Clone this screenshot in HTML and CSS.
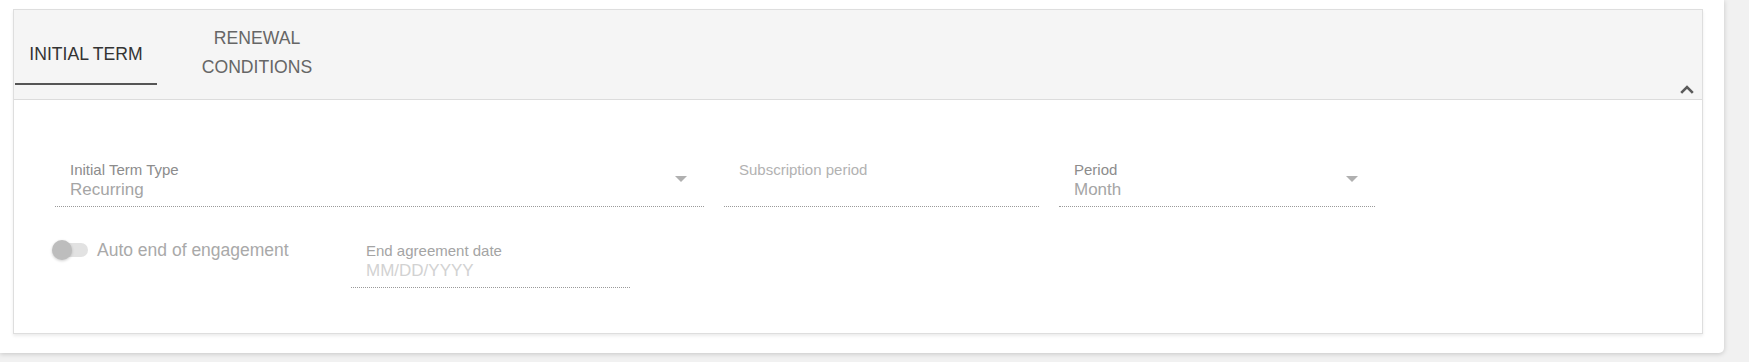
FILE: index.html
```html
<!DOCTYPE html>
<html lang="en">
<head>
<meta charset="utf-8">
<title>Initial Term</title>
<link rel="stylesheet" href="styles.css">
</head>
<body>
<div class="card">
  <section class="panel">
    <header class="panel-header">
      <nav class="tabs">
        <div class="tab tab-active">INITIAL TERM</div>
        <div class="tab tab-wrap">RENEWAL CONDITIONS</div>
      </nav>
      <button class="collapse" aria-label="Collapse">
        <svg width="14" height="9" viewBox="0 0 14 9"><path d="M1.2 7.8 L7 2 L12.8 7.8" fill="none" stroke="#5a5a5a" stroke-width="2.6"/></svg>
      </button>
    </header>
    <div class="panel-body">
      <div class="row row-fields">
        <div class="field w-6">
          <div class="field-text">
            <div class="field-label">Initial Term Type</div>
            <div class="field-value">Recurring</div>
          </div>
          <span class="arrow"></span>
        </div>
        <div class="field w-3a">
          <div class="field-text">
            <div class="field-label field-label-light">Subscription period</div>
            <div class="field-value">&nbsp;</div>
          </div>
        </div>
        <div class="field w-3b">
          <div class="field-text">
            <div class="field-label">Period</div>
            <div class="field-value">Month</div>
          </div>
          <span class="arrow"></span>
        </div>
      </div>
      <div class="row row-second">
        <label class="toggle-group">
          <span class="toggle"><span class="track"></span><span class="thumb"></span></span>
          <span class="toggle-text">Auto end of engagement</span>
        </label>
        <div class="field w-date">
          <div class="field-text">
            <div class="field-label field-label-mid">End agreement date</div>
            <div class="field-value field-placeholder">MM/DD/YYYY</div>
          </div>
        </div>
      </div>
    </div>
  </section>
</div>
</body>
</html>
```

FILE: styles.css
```css
html, body {
  margin: 0;
  padding: 0;
}
body {
  background: #f1f1f1;
  font-family: "Liberation Sans", Arial, sans-serif;
  width: 1749px;
  height: 362px;
  overflow: hidden;
}
.card {
  width: 1724px;
  box-sizing: border-box;
  background: #fff;
  padding: 9px 21px 19px 13px;
  border-radius: 0 0 5px 0;
  box-shadow: 0 1px 5px rgba(0, 0, 0, 0.18);
}
.panel {
  border: 1px solid #dedede;
  background: #fff;
  box-shadow: 0 2px 3px rgba(0, 0, 0, 0.08);
}
.panel-header {
  background: #f5f5f5;
  height: 89px;
  border-bottom: 1px solid #dcdcdc;
  display: flex;
  justify-content: space-between;
  align-items: flex-end;
}
.tabs {
  display: flex;
  align-self: flex-start;
  margin-top: 15px;
  margin-left: 1px;
}
.tab {
  height: 58px;
  border-bottom: 2px solid transparent;
  display: flex;
  align-items: center;
  justify-content: center;
  text-align: center;
  font-size: 17.6px;
  line-height: 29px;
  color: #666;
}
.tab-active {
  width: 142px;
  color: #333;
  border-bottom-color: #555;
}
.tab-wrap {
  width: 200px;
  padding: 0 38px;
  box-sizing: border-box;
}
.collapse {
  border: 0;
  background: none;
  padding: 0;
  margin: 0 8px 5px 0;
  width: 14px;
  height: 9px;
  display: flex;
}
.panel-body {
  padding: 62px 0 45px 41px;
}
.row {
  display: flex;
}
.row-fields {
  gap: 20px;
}
.row-second {
  margin-top: 36px;
}
.field {
  display: flex;
  align-items: flex-start;
  box-sizing: border-box;
  padding: 0 0 6px 15px;
  border-bottom: 1px dotted #9a9a9a;
}
.w-6 { width: 649px; }
.w-3a { width: 315px; }
.w-3b { width: 316px; }
.w-date { width: 279px; }
.field-text {
  flex: 1;
}
.field-label {
  font-size: 15px;
  line-height: 16px;
  color: #8c8c8c;
}
.field-label-light {
  color: #b2b2b2;
}
.field-label-mid {
  color: #a4a4a4;
}
.field-value {
  margin-top: 2px;
  font-size: 17px;
  line-height: 20px;
  color: #a5a5a5;
}
.field-placeholder {
  color: #d2d2d2;
}
.arrow {
  width: 0;
  height: 0;
  margin: 14px 17px 0 0;
  border-left: 6px solid transparent;
  border-right: 6px solid transparent;
  border-top: 6px solid #b0b0b0;
}
.toggle-group {
  display: flex;
  align-items: center;
  width: 299px;
  height: 20px;
  margin: -3px 0 0 -3px;
}
.toggle {
  position: relative;
  width: 36px;
  height: 20px;
  display: flex;
  align-items: center;
}
.track {
  width: 34px;
  height: 14px;
  margin-left: 2px;
  border-radius: 7px;
  background: #e2e2e2;
}
.thumb {
  position: absolute;
  left: 0;
  top: 0;
  width: 20px;
  height: 20px;
  border-radius: 50%;
  background: #bdbdbd;
  box-shadow: 0 1px 3px rgba(0, 0, 0, 0.2);
}
.toggle-text {
  margin-left: 9px;
  font-size: 17.5px;
  line-height: 20px;
  color: #a9a9a9;
}
```
